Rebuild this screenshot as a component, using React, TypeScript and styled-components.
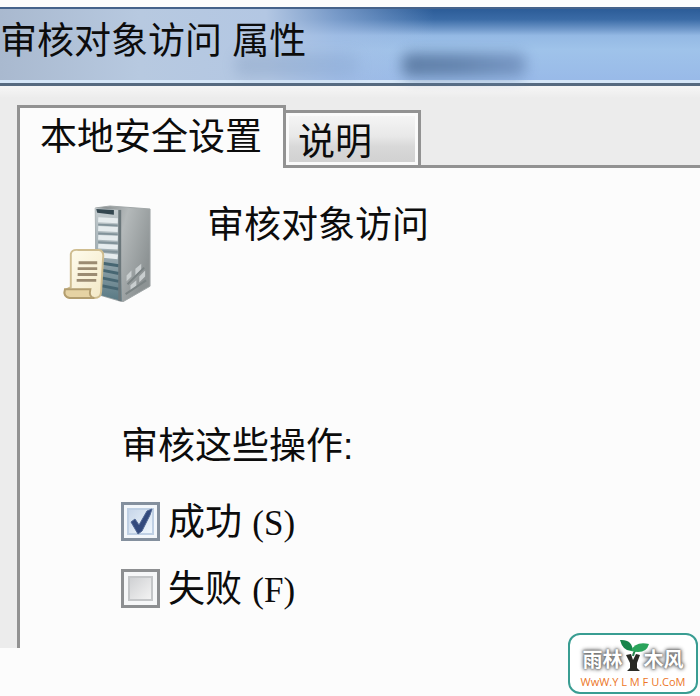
import React, { useState } from "react";
import styled, { createGlobalStyle, css } from "styled-components";

const sans = `"Liberation Sans", "Noto Sans CJK SC", sans-serif`;

const GlobalStyle = createGlobalStyle`
  * { box-sizing: border-box; }
  html, body, #root { height: 100%; }
  body {
    margin: 0;
    overflow: hidden;
    background: #fcfcfc;
    color: #0c0c0c;
    font-family: ${sans};
    font-size: 37px;
    line-height: 44px;
  }
`;

const Page = styled.main`
  position: relative;
  display: flex;
  flex-direction: column;
  min-height: 100%;
  padding: 7px 0 48px;
`;

const TitleBar = styled.header`
  position: relative;
  display: flex;
  align-items: center;
  height: 79px;
  padding-bottom: 8px;
  border-top: 2px solid #45628a;
  border-bottom: 3px solid #566a80;
  box-shadow: inset 0 -3px 0 #d5e6f8;
  background:
    linear-gradient(90deg, #a9b9cf 0, #b7c9e0 20%, #b3c7e3 38%, rgba(165, 190, 228, 0.6) 48%, rgba(160, 190, 230, 0) 62%),
    linear-gradient(180deg, #2c5c98 0, #3a6ba6 14%, #6a93c6 26%, #94b9e4 36%, #9fc3ea 55%, #98b9e8 100%);
`;

const Shade = styled.span<{ $faint?: boolean }>`
  position: absolute;
  left: ${({ $faint }) => ($faint ? 235 : 402)}px;
  bottom: 6px;
  width: 124px;
  height: 24px;
  border-radius: 8px;
  background: linear-gradient(90deg, #58779f, #5e7ea8 45%, #7594c1);
  opacity: ${({ $faint }) => ($faint ? 0.2 : 0.9)};
  filter: blur(7px);
`;

const Title = styled.h1`
  position: relative;
  margin: 0;
  font-size: inherit;
  font-weight: 400;
  white-space: nowrap;
`;

const Dialog = styled.section`
  flex: 1;
  display: flex;
  flex-direction: column;
  padding: 19px 0 0 17px;
  background: linear-gradient(180deg, #f6f6f6, #ececec 12px);
`;

const TabList = styled.div`
  display: flex;
  align-items: flex-end;
  height: 63px;
  border-bottom: 3px solid #929292;
`;

const Tab = styled.button<{ $active: boolean }>`
  flex: none;
  border: 3px solid #929292;
  border-bottom: 0;
  color: inherit;
  font: inherit;
  white-space: nowrap;
  text-align: left;
  ${({ $active }) =>
    $active
      ? css`
          height: 63px;
          width: 269px;
          margin-bottom: -3px;
          padding: 0 0 0 20px;
          background: #fcfcfc;
        `
      : css`
          height: 55px;
          width: 135px;
          padding: 7px 0 0 12px;
          border-left: 0;
          box-shadow: inset 0 0 0 3px #fafafa;
          background: linear-gradient(180deg, #f6f6f6 0, #e8e8e8 45%, #d8d8d8 65%, #d0d0d0 100%);
        `}
`;

const Panel = styled.div`
  flex: 1;
  padding: 34px 0 0 42px;
  border-left: 3px solid #929292;
  background: #fcfcfc;
`;

const Policy = styled.div`
  display: flex;
  align-items: flex-start;
  gap: 55px;
  height: 223px;
`;

const PolicyName = styled.h2`
  margin: 2px 0 0;
  font-size: inherit;
  font-weight: 400;
  white-space: nowrap;
`;

const ServerPicture = styled.svg`
  flex: none;
  width: 90px;
  height: 100px;
`;

const Options = styled.fieldset`
  margin: 0 0 0 59px;
  padding: 0;
  border: 0;
`;

const Legend = styled.legend`
  padding: 0;
  margin-bottom: 30px;
`;

const Option = styled.label`
  display: flex;
  align-items: center;
  gap: 8px;
  height: 44px;
  margin-bottom: 23px;
  white-space: nowrap;
`;

const OptionText = styled.span`
  padding-top: 4px;
`;

const CheckFrame = styled.span`
  position: relative;
  display: inline-flex;
  width: 39px;
  height: 39px;
`;

const Check = styled.input`
  appearance: none;
  width: 39px;
  height: 39px;
  margin: 0;
  border: 3px solid #8d8f91;
  box-shadow: inset 0 0 0 4px #f6f7f8, inset 0 0 0 6px #c4c6c8;
  background: linear-gradient(135deg, #c5c7ca, #f2f2f2 80%);

  &:checked {
    border-color: #84909e;
    box-shadow: inset 0 0 0 3px #f3f7fb, inset 0 0 0 5px #bfd0e4;
    background: linear-gradient(135deg, #bfcfe5, #edf5fc 80%);
  }
`;

const Tick = styled.svg`
  position: absolute;
  inset: 0;
  pointer-events: none;
`;

const Key = styled.span`
  font-family: "Liberation Serif", serif;
  font-size: 35px;
`;

const Watermark = styled.a`
  position: absolute;
  right: 2px;
  bottom: 2px;
  display: flex;
  flex-direction: column;
  align-items: center;
  width: 130px;
  height: 61px;
  padding-top: 7px;
  border: 2px solid #399d92;
  border-radius: 12px;
  background: #fff;
  text-decoration: none;
`;

const Brand = styled.span`
  display: flex;
  align-items: center;
  height: 33px;
  color: #fff;
  font: 700 20px/28px "Noto Sans CJK SC", sans-serif;
  text-shadow: 0 0 2px #666, 0 0 3px #777, 0 0 4px #888, 0 0 5px #888;
`;

const Sprout = styled.svg`
  flex: none;
  width: 32px;
  height: 36px;
  margin: -6px -6px 0 -5px;
`;

const Site = styled.span`
  color: #ec7627;
  font: 11px/14px "Open Sans", sans-serif;
  white-space: pre;
`;

function ServerIcon() {
  return (
    <ServerPicture viewBox="0 0 92 102" aria-hidden="true">
      <defs>
        <linearGradient id="side" x1="0" y1="0" x2="1" y2="0.5">
          <stop offset="0" stopColor="#7b8284" />
          <stop offset="0.5" stopColor="#b4b9ba" />
          <stop offset="1" stopColor="#8d9394" />
        </linearGradient>
        <linearGradient id="front" x1="0" y1="0" x2="0" y2="1">
          <stop offset="0" stopColor="#c4cccf" />
          <stop offset="0.5" stopColor="#9eacb2" />
          <stop offset="1" stopColor="#587984" />
        </linearGradient>
        <linearGradient id="paper" x1="0" y1="0" x2="1" y2="1">
          <stop offset="0" stopColor="#fffdf0" />
          <stop offset="1" stopColor="#f3e8c6" />
        </linearGradient>
      </defs>
      <path d="M34 6 49 4 90 7V86L62 102 35 94Z" fill="url(#side)" stroke="#a0a6a7" />
      <path d="M34 6 59 8 61 101 35 94Z" fill="url(#front)" />
      <path d="M35 7 53 8V13L36 11Z" fill="#33464f" />
      <path d="M37 18 57 19M37 27 57 28M37 36 57 37M37 45 57 46M37 54 57 56" stroke="#e6ecee" strokeWidth="5" />
      <path d="M37 23 57 24M37 32 57 33M37 41 57 42M37 50 57 51" stroke="#82939a" strokeWidth="2" />
      <path d="M38 62 58 65M38 69 58 73M38 77 58 81M38 85 58 89" stroke="#476672" strokeWidth="3" />
      <path d="M59 8V101" stroke="#6b777b" strokeWidth="3" />
      <g fill="#c9cecf">
        <path d="M66 75 71 70V76L66 81ZM75 68 81 63V69L75 75ZM70 85 76 80V86L70 91ZM79 76 85 70V76L79 82Z" />
      </g>
      <path d="M65 94 86 80M67 84 84 67" stroke="#7b8384" strokeWidth="2" />
      <path
        d="M9 53Q10 48 17 49H38Q43 50 42 57L40 91Q40 98 33 98H8Q1 97 3 90L9 87Z"
        fill="url(#paper)"
        stroke="#cfbd90"
        strokeWidth="2"
      />
      <path d="M3 89H29Q27 97 33 98H8Q1 97 3 89Z" fill="#e6d3a4" stroke="#b39e70" strokeWidth="2" />
      <path d="M17 62H36M16 68H36M16 74H36M15 80H35" stroke="#9b8b72" strokeWidth="3" />
    </ServerPicture>
  );
}

interface AuditOptionProps {
  text: string;
  accessKey: string;
  initial: boolean;
}

function AuditOption({ text, accessKey, initial }: AuditOptionProps) {
  const [checked, setChecked] = useState(initial);
  return (
    <Option>
      <CheckFrame>
        <Check type="checkbox" checked={checked} onChange={(e) => setChecked(e.target.checked)} />
        {checked && (
          <Tick viewBox="0 0 39 39" aria-hidden="true">
            <path d="M10 20 14 17 18 23 26 9 31 7 29 13 21 29 17 32Z" fill="#334a7d" stroke="#526894" />
          </Tick>
        )}
      </CheckFrame>
      <OptionText>
        {text} <Key>({accessKey})</Key>
      </OptionText>
    </Option>
  );
}

export default function App() {
  return (
    <>
      <GlobalStyle />
      <Page>
        <TitleBar>
          <Shade $faint />
          <Shade />
          <Title>审核对象访问 属性</Title>
        </TitleBar>
        <Dialog>
          <TabList role="tablist">
            <Tab type="button" role="tab" aria-selected $active>
              本地安全设置
            </Tab>
            <Tab type="button" role="tab" aria-selected={false} $active={false}>
              说明
            </Tab>
          </TabList>
          <Panel role="tabpanel">
            <Policy>
              <ServerIcon />
              <PolicyName>审核对象访问</PolicyName>
            </Policy>
            <Options>
              <Legend>审核这些操作:</Legend>
              <AuditOption text="成功" accessKey="S" initial />
              <AuditOption text="失败" accessKey="F" initial={false} />
            </Options>
          </Panel>
        </Dialog>
        <Watermark href="#">
          <Brand>
            雨林
            <Sprout viewBox="0 0 32 36" aria-hidden="true">
              <path d="M8 17 13 16 15 22 18 16 22 17 19 25 19 30 22 33H9L12 30V25Z" fill="#292a25" />
              <path d="M15 18Q16 12 21 9" fill="none" stroke="#23804b" strokeWidth="2" />
              <path d="M2 2Q14 1 15 13Q5 14 2 2Z" fill="#16854a" />
              <path d="M13 13Q17 3 31 6Q28 17 13 13Z" fill="#2aa45b" />
            </Sprout>
            木风
          </Brand>
          <Site>WwW.Y L M F U.CoM</Site>
        </Watermark>
      </Page>
    </>
  );
}
